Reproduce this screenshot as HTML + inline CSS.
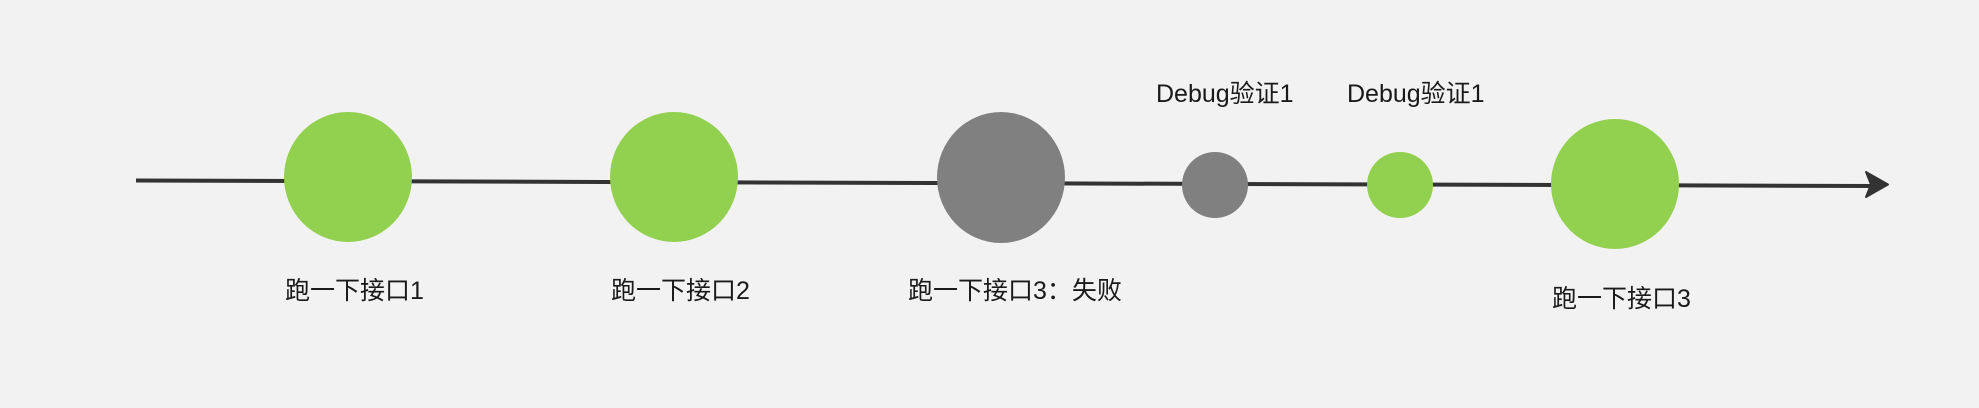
<!DOCTYPE html>
<html><head><meta charset="utf-8"><style>
html,body{margin:0;padding:0;background:#f2f2f2;}
svg{display:block}
text{font-family:"Liberation Sans","Noto Sans CJK SC",sans-serif;fill:#1a1a1a;font-size:25px}
</style></head><body>
<svg width="1979" height="408" viewBox="0 0 1979 408" xmlns="http://www.w3.org/2000/svg">
<rect width="1979" height="408" fill="#f2f2f2"/>
<line x1="136" y1="180.5" x2="1875" y2="186" stroke="#333" stroke-width="4"/>
<path d="M1866 172 L1888 184.5 L1866 197 L1871 184.5 Z" fill="#333" stroke="#333" stroke-width="2" stroke-linejoin="round"/>
<ellipse cx="348" cy="177" rx="64" ry="65" fill="#92d050"/>
<ellipse cx="674" cy="177" rx="64" ry="65" fill="#92d050"/>
<ellipse cx="1001" cy="177.5" rx="64" ry="65.5" fill="#808080"/>
<circle cx="1215" cy="185" r="33" fill="#808080"/>
<circle cx="1400" cy="185" r="33" fill="#92d050"/>
<ellipse cx="1615" cy="184" rx="64" ry="65" fill="#92d050"/>
<text x="1156" y="102">Debug验证1</text>
<text x="1347" y="102">Debug验证1</text>
<text x="285" y="299">跑一下接口1</text>
<text x="611" y="299">跑一下接口2</text>
<text x="908" y="299">跑一下接口3：失败</text>
<text x="1552" y="307">跑一下接口3</text>
</svg>
</body></html>
